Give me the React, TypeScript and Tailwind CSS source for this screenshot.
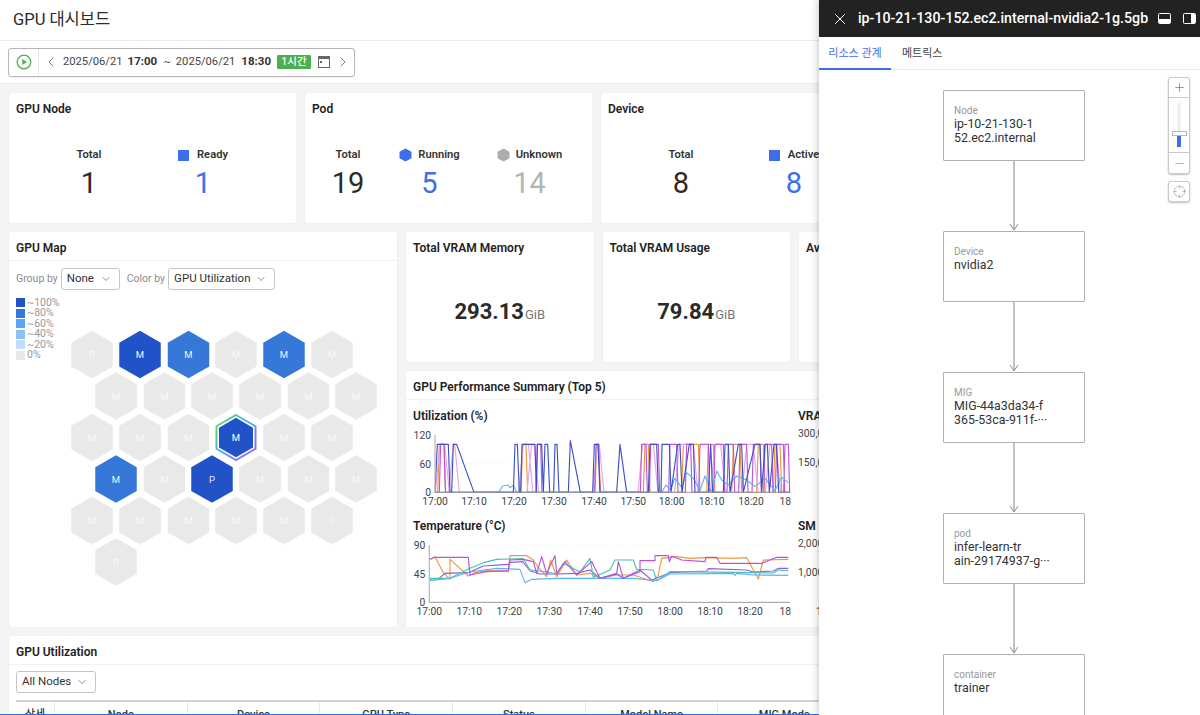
import { ChevronDown, ChevronLeft, ChevronRight, Crosshair, Minus, Plus, X } from "lucide-react";

const UTIL_TOP = 133;
const UTIL_BASE = 277;

function pulses(list: number[][], edge = 5) {
  const pts: string[] = [`105,${UTIL_BASE}`];
  for (const [a, b] of list) {
    pts.push(`${a - edge},${UTIL_BASE}`, `${a},${UTIL_TOP}`, `${b},${UTIL_TOP}`, `${b + edge},${UTIL_BASE}`);
  }
  pts.push(`1170,${UTIL_BASE}`);
  return pts.join(" ");
}

const utilSeries = [
  {
    color: "#f0973a",
    points: pulses([[118, 132], [368, 378], [590, 596], [735, 745], [850, 895], [925, 940], [1000, 1020], [1075, 1090], [1125, 1140]]),
  },
  {
    color: "#e6a4ea",
    points: pulses([[120, 134], [160, 164], [370, 385], [395, 402], [592, 598], [728, 760], [838, 880], [945, 962], [1040, 1060], [1110, 1128]], 14),
  },
  {
    color: "#bd55dc",
    points: pulses([[122, 132], [412, 422], [588, 596], [725, 738], [752, 775], [810, 830], [860, 872], [900, 925], [945, 970], [985, 1000], [1020, 1040], [1060, 1080], [1095, 1115], [1130, 1150], [1155, 1165]], 4),
  },
  {
    color: "#5cb2fb",
    points: "105,277 296,277 308,258 325,255 330,263 340,256 350,277 785,277 798,255 810,270 825,235 845,262 860,218 880,235 900,272 915,228 935,277 950,213 965,240 985,255 1010,228 1040,240 1065,260 1095,235 1125,272 1145,232 1165,248",
  },
  {
    color: "#3f50c4",
    points: "105,277 112,133 145,133 150,277 155,277 160,133 170,133 222,277 340,277 345,133 352,133 358,277 362,277 366,133 405,133 409,277 412,133 425,133 430,277 435,133 443,133 449,277 461,277 465,133 471,133 477,277 505,277 511,122 541,277 578,277 583,133 594,133 600,277 650,277 660,133 680,277 745,277 750,133 770,133 775,277 783,277 786,133 808,133 813,277 833,133 840,133 846,277 868,133 880,133 885,277 925,277 932,133 938,277 970,277 975,133 985,133 990,277 1015,133 1025,133 1030,277 1065,133 1080,133 1085,277 1095,133 1102,133 1108,277 1122,133 1130,133 1136,277 1170,277",
  },
];

const tempSeries = [
  {
    color: "#f0973a",
    points: "88,150 105,140 130,188 150,208 150,148 205,198 225,188 260,182 325,185 330,137 380,137 400,150 415,172 440,200 452,150 470,200 500,150 530,195 570,190 600,205 650,195 700,195 760,215 775,195 785,145 830,140 870,145 915,143 1000,145 1040,143 1075,207 1090,150 1165,148",
  },
  {
    color: "#8b5fe0",
    points: "88,207 115,207 135,190 205,188 250,168 325,163 330,157 368,155 390,182 420,192 470,192 530,190 570,180 600,205 650,192 670,205 720,180 755,210 810,188 920,183 925,176 1040,180 1060,186 1120,183 1135,175 1165,175",
  },
  {
    color: "#4fc1b3",
    points: "88,205 150,205 210,175 250,158 290,148 370,146 390,180 440,186 470,192 490,160 540,186 570,145 580,202 630,180 645,150 700,150 710,178 760,180 770,212 810,185 1000,187 1120,189 1135,180 1165,182",
  },
  {
    color: "#5cb2fb",
    points: "88,212 150,205 210,186 290,175 360,178 375,218 395,208 470,205 530,205 600,205 700,205 770,212 810,192 1000,190 1005,196 1010,190 1060,195 1165,196",
  },
  {
    color: "#b355dc",
    points: "88,148 105,142 205,142 210,195 260,185 325,182 330,150 370,148 400,155 410,190 425,140 440,190 465,137 470,190 495,155 530,195 575,155 600,205 650,190 655,155 670,205 720,185 720,152 765,152 765,137 805,137 808,155 815,138 845,150 915,155 918,142 950,142 960,160 1000,160 1085,160 1130,142 1165,142",
  },
];

const utilTicks = [
  ["17:00", 105], ["17:10", 222], ["17:20", 342], ["17:30", 462], ["17:40", 582],
  ["17:50", 700], ["18:00", 815], ["18:10", 935], ["18:20", 1053], ["18:30", 1177],
] as const;

const tempTicks = [
  ["17:00", 88], ["17:10", 208], ["17:20", 328], ["17:30", 448], ["17:40", 570],
  ["17:50", 690], ["18:00", 810], ["18:10", 930], ["18:20", 1050], ["18:30", 1177],
] as const;

function Chart({ title, yLabels, ticks, series, axisX }: {
  title: string;
  yLabels: string[];
  ticks: readonly (readonly [string, number])[];
  series: { color: string; points: string }[];
  axisX: number;
}) {
  return (
    <div className="h-[110px]">
      <div className="text-[12px] font-semibold leading-[16px] text-[#222]">{title}</div>
      <svg width={378} height={85} viewBox="39 78 1134 255" className="mt-[2px] block" fill="none">
        <line x1={axisX} x2={1170} y1={105} y2={105} stroke="#eeeeee" strokeWidth={2} strokeDasharray="3 4" />
        <line x1={axisX} x2={1170} y1={190} y2={190} stroke="#eeeeee" strokeWidth={2} strokeDasharray="3 4" />
        {series.map((s) => (
          <polyline key={s.color} points={s.points} stroke={s.color} strokeWidth={3.4} strokeLinejoin="round" />
        ))}
        <line x1={axisX} x2={axisX} y1={105} y2={278} stroke="#bdbdbd" strokeWidth={4} />
        <line x1={axisX} x2={1170} y1={277} y2={277} stroke="#9a9a9a" strokeWidth={3} />
        {yLabels.map((label, i) => (
          <text key={label} x={axisX - 12} y={117 + i * 86} textAnchor="end" fontSize={31} fill="#444">{label}</text>
        ))}
        {ticks.map(([label, x]) => (
          <text key={label} x={x} y={315} textAnchor="middle" fontSize={31} fill="#444">{label}</text>
        ))}
      </svg>
    </div>
  );
}

function SideChart({ title, labels, showTick }: { title: string; labels: string[]; showTick?: boolean }) {
  return (
    <div className="h-[110px]">
      <div className="text-[12px] font-semibold leading-[16px] text-[#222]">{title}</div>
      <svg width={378} height={85} viewBox="39 78 1134 255" className="mt-[2px] block">
        {labels.map((label, i) => (
          <text key={label} x={39} y={112 + i * 86} fontSize={31} fill="#444">{label}</text>
        ))}
        {showTick && <text x={93} y={315} fontSize={31} fill="#444">17:00</text>}
      </svg>
    </div>
  );
}

function Card({ title, className, children }: { title: string; className?: string; children?: React.ReactNode }) {
  return (
    <div className={`rounded-[2px] bg-white shadow-[0_0_1px_rgba(0,0,0,0.12)] ${className ?? ""}`}>
      <div className="px-[7px] pt-[8px] text-[12px] font-semibold leading-[16px] text-[#222]">{title}</div>
      {children}
    </div>
  );
}

function Stat({ label, value, valueClass, mark, className }: {
  label: string;
  value: string;
  valueClass?: string;
  mark?: "square" | "hexBlue" | "hexGray";
  className?: string;
}) {
  return (
    <div className={`flex flex-col items-center ${className ?? ""}`}>
      <div className="flex h-[16px] items-center gap-[6px] text-[11.2px] font-semibold text-[#333]">
        {mark === "square" && <span className="mr-[2px] h-[11px] w-[11px] bg-[#3e6ee8]" />}
        {mark === "hexBlue" && <HexIcon fill="#3e6ee8" />}
        {mark === "hexGray" && <HexIcon fill="#adadad" />}
        {label}
      </div>
      <div className={`mt-[2px] text-[29px] leading-[36px] ${valueClass ?? "text-[#2b2b2b]"}`}>{value}</div>
    </div>
  );
}

function HexIcon({ fill }: { fill: string }) {
  return (
    <svg width={13} height={14} viewBox="0 0 13 14">
      <polygon points="6.5,0.5 12.5,3.7 12.5,10.3 6.5,13.5 0.5,10.3 0.5,3.7" fill={fill} />
    </svg>
  );
}

function SelectBox({ label, className }: { label: string; className?: string }) {
  return (
    <div className={`flex h-[22px] items-center justify-between rounded-[3px] border border-[#c4c4c4] bg-white pl-[5px] pr-[7px] text-[11.5px] text-[#333] ${className ?? ""}`}>
      {label}
      <ChevronDown size={12} strokeWidth={1.5} className="text-[#666]" />
    </div>
  );
}

const GRAY = "#e9e9e9";
const DARK = "#2252c8";
const MID = "#3578d8";

const hexes: [number, number, string, string][] = [
  [92, 354.5, "P", GRAY], [140, 354.5, "M", DARK], [188.5, 354.5, "M", MID], [236, 354.5, "M", GRAY], [284, 354.5, "M", MID], [332, 354.5, "M", GRAY],
  [116, 396, "M", GRAY], [164.5, 396, "M", GRAY], [212, 396, "M", GRAY], [260, 396, "M", GRAY], [308.5, 396, "M", GRAY], [356, 396, "M", GRAY],
  [92, 437.5, "M", GRAY], [140, 437.5, "M", GRAY], [188.5, 437.5, "M", GRAY], [284, 437.5, "M", GRAY], [332, 437.5, "M", GRAY],
  [116, 479, "M", MID], [164.5, 479, "M", GRAY], [212, 479, "P", DARK], [260, 479, "M", GRAY], [308.5, 479, "M", GRAY], [356, 479, "M", GRAY],
  [92, 520.5, "M", GRAY], [140, 520.5, "M", GRAY], [188.5, 520.5, "M", GRAY], [236, 520.5, "M", GRAY], [284, 520.5, "M", GRAY], [332, 520.5, "P", GRAY],
  [116, 562, "P", GRAY],
];

function hexPoints(cx: number, cy: number, w: number, h: number) {
  const s = h / 4;
  return `${cx},${cy - h / 2} ${cx + w / 2},${cy - s} ${cx + w / 2},${cy + s} ${cx},${cy + h / 2} ${cx - w / 2},${cy + s} ${cx - w / 2},${cy - s}`;
}

function HexMap() {
  return (
    <svg width={388} height={331} viewBox="9 296 388 331" className="block">
      <defs>
        <linearGradient id="ring" x1="0" y1="0" x2="1" y2="1">
          <stop offset="0" stopColor="#6fdc55" />
          <stop offset="0.45" stopColor="#45b5dc" />
          <stop offset="1" stopColor="#b455f5" />
        </linearGradient>
      </defs>
      {hexes.map(([x, y, label, fill]) => (
        <g key={`${x}-${y}`}>
          <polygon points={hexPoints(x, y, 41.5, 47.5)} fill={fill} />
          <text x={x} y={y + 3.5} textAnchor="middle" fontSize={9.5} fill="#ffffff" fillOpacity={fill === GRAY ? 0.75 : 0.95}>{label}</text>
        </g>
      ))}
      <polygon points={hexPoints(236, 437.5, 39, 45)} fill="none" stroke="url(#ring)" strokeWidth={2} />
      <polygon points={hexPoints(236, 437.5, 34, 39.5)} fill={DARK} />
      <text x={236} y={441} textAnchor="middle" fontSize={9.5} fill="#ffffff">M</text>
    </svg>
  );
}

const legend = [
  ["#2252c8", "~100%"], ["#3578d8", "~80%"], ["#5aa5f5", "~60%"], ["#90bff5", "~40%"], ["#c2dcfc", "~20%"], ["#e8e8e8", "0%"],
];

const columns = ["상세", "Node", "Device", "GPU Type", "Status", "Model Name", "MIG Mode", "MIG Profile"];

const graphNodes = [
  { kind: "Node", lines: ["ip-10-21-130-1", "52.ec2.internal"] },
  { kind: "Device", lines: ["nvidia2"] },
  { kind: "MIG", lines: ["MIG-44a3da34-f", "365-53ca-911f-···"] },
  { kind: "pod", lines: ["infer-learn-tr", "ain-29174937-g···"] },
  { kind: "container", lines: ["trainer"] },
];

function Connector() {
  return (
    <svg width={12} height={70} viewBox="0 0 12 70" className="block">
      <line x1={6} x2={6} y1={0} y2={69} stroke="#999999" strokeWidth={1.2} />
      <polyline points="2,63 6,69 10,63" fill="none" stroke="#8f8f8f" strokeWidth={1} />
    </svg>
  );
}

function DetailPanel() {
  return (
    <div className="absolute bottom-0 right-0 top-0 z-10 flex w-[381px] flex-col bg-white shadow-[-2px_0_6px_rgba(0,0,0,0.18)]">
      <div className="flex h-[37px] shrink-0 items-center bg-[#222222] text-white">
        <X size={18} strokeWidth={1.3} className="ml-[12px]" />
        <span className="ml-[9px] whitespace-nowrap pt-[1px] text-[14.2px] font-medium">ip-10-21-130-152.ec2.internal-nvidia2-1g.5gb</span>
        <svg width={13} height={11} viewBox="0 0 13 11" className="ml-[10px] shrink-0">
          <rect x="0.5" y="0.5" width="12" height="10" rx="1" fill="none" stroke="#fff" />
          <rect x="1" y="6" width="11" height="4" fill="#fff" />
        </svg>
        <svg width={13} height={11} viewBox="0 0 13 11" className="ml-[12px] shrink-0">
          <rect x="0.5" y="0.5" width="12" height="10" rx="1" fill="none" stroke="#fff" />
          <rect x="8" y="1" width="4" height="9" fill="#fff" />
        </svg>
      </div>
      <div className="flex h-[33px] shrink-0 border-b border-[#e9e9e9] text-[11px]">
        <div className="flex h-[33px] w-[72px] items-center justify-center border-b-2 border-[#3e6ee8] pt-[3px] text-[#3e6ee8]">리소스 관계</div>
        <div className="ml-[11px] flex h-[32px] items-center pt-[3px] text-[#444]">메트릭스</div>
      </div>
      <div className="relative flex-1 overflow-hidden">
        <div className="ml-[124px] flex w-[142px] flex-col items-center pt-[20px]">
          {graphNodes.map((node, i) => (
            <div key={node.kind} className="flex flex-col items-center">
              <div className="h-[71px] w-[142px] rounded-[1px] border border-[#b0b0b0] bg-white px-[10px] pt-[13px] text-[12.4px] leading-[14px] text-[#333]">
                <div className="text-[10px] leading-[13px] text-[#999]">{node.kind}</div>
                {node.lines.map((line) => (
                  <div key={line} className="whitespace-nowrap">{line}</div>
                ))}
              </div>
              {i < graphNodes.length - 1 && <Connector />}
            </div>
          ))}
        </div>
        <div className="absolute right-[10px] top-[7px] flex flex-col gap-[7px]">
          <div className="flex h-[97px] w-[22px] flex-col items-center rounded-[3px] border border-[#cacaca] bg-white shadow-[0_1px_2px_rgba(0,0,0,0.25)]">
            <div className="flex h-[20px] w-full items-center justify-center border-b border-[#cacaca]">
              <Plus size={13} strokeWidth={1.2} className="text-[#666]" />
            </div>
            <div className="relative h-[55px] w-full border-b border-[#cacaca]">
              <div className="absolute bottom-[5px] left-[8px] top-[5px] w-[4px] bg-[#efefef]" />
              <div className="absolute bottom-[5px] left-[8px] h-[11px] w-[4px] bg-[#3e6ee8]" />
              <div className="absolute bottom-[16px] left-[3px] h-[5px] w-[15px] border border-[#b8b8b8] bg-white" />
            </div>
            <div className="flex flex-1 items-center justify-center">
              <Minus size={13} strokeWidth={1.2} className="text-[#888]" />
            </div>
          </div>
          <div className="flex h-[21px] w-[22px] items-center justify-center rounded-[3px] border border-[#cacaca] bg-white shadow-[0_1px_2px_rgba(0,0,0,0.25)]">
            <Crosshair size={13} strokeWidth={1} className="text-[#888]" />
          </div>
        </div>
      </div>
    </div>
  );
}

export default function App() {
  return (
    <div className="relative h-[715px] w-[1200px] overflow-hidden bg-[#f4f4f4] font-['Roboto','Noto_Sans_CJK_KR',sans-serif]">
      <div className="flex h-[41px] items-center border-b border-[#ececec] bg-white pl-[13px] text-[16.5px] text-[#2b2b2b]">GPU 대시보드</div>
      <div className="flex h-[43px] items-center border-b border-[#ececec] bg-white pl-[8px]">
        <div className="flex h-[29px] w-[347px] items-center rounded-[3px] border border-[#b5b5b5] text-[11.2px] text-[#444] shadow-[0_1px_1px_rgba(0,0,0,0.06)]">
          <div className="flex h-full w-[30px] items-center justify-center border-r border-[#e4e4e4]">
            <svg width={16} height={16} viewBox="0 0 16 16">
              <circle cx="8" cy="8" r="6.8" fill="none" stroke="#4caf50" strokeWidth="1.3" />
              <polygon points="6.3,5 11,8 6.3,11" fill="#4caf50" />
            </svg>
          </div>
          <ChevronLeft size={16} strokeWidth={1.3} className="ml-[4px] text-[#666]" />
          <span className="ml-[4px]">2025/06/21</span>
          <span className="ml-[5px] text-[11.5px] font-bold text-[#333]">17:00</span>
          <span className="ml-[6px]">~</span>
          <span className="ml-[5px]">2025/06/21</span>
          <span className="ml-[6px] text-[11.5px] font-bold text-[#333]">18:30</span>
          <span className="ml-[6px] flex h-[14px] w-[34px] items-center justify-center rounded-[1px] bg-[#4caf50] text-[10.5px] font-medium text-white">1시간</span>
          <svg width={12} height={12} viewBox="0 0 12 12" className="ml-[7px]">
            <rect x="0.5" y="0.5" width="11" height="11" fill="none" stroke="#666" />
            <rect x="0.5" y="0.5" width="11" height="2.5" fill="#666" />
            <rect x="2" y="5" width="2" height="2" fill="#666" />
          </svg>
          <ChevronRight size={16} strokeWidth={1.3} className="ml-[5px] text-[#666]" />
        </div>
      </div>

      <div className="flex w-[1400px] flex-col gap-[9px] p-[9px]">
        <div className="flex gap-[9px]">
          <Card title="GPU Node" className="h-[130px] w-[287px]">
            <div className="flex pt-[30px]">
              <Stat label="Total" value="1" className="ml-[48px] w-[64px]" />
              <Stat label="Ready" value="1" mark="square" valueClass="text-[#3e6ee8]" className="ml-[50px] w-[64px]" />
            </div>
          </Card>
          <Card title="Pod" className="h-[130px] w-[287px]">
            <div className="flex pt-[30px]">
              <Stat label="Total" value="19" className="ml-[11px] w-[64px]" />
              <Stat label="Running" value="5" mark="hexBlue" valueClass="text-[#3e6ee8]" className="ml-[12px] w-[75px]" />
              <Stat label="Unknown" value="14" mark="hexGray" valueClass="text-[#b4b4b4]" className="ml-[25px] w-[75px]" />
            </div>
          </Card>
          <Card title="Device" className="h-[130px] w-[287px]">
            <div className="flex pt-[30px]">
              <Stat label="Total" value="8" className="ml-[48px] w-[64px]" />
              <Stat label="Active" value="8" mark="square" valueClass="text-[#3e6ee8]" className="ml-[48px] w-[66px]" />
            </div>
          </Card>
        </div>

        <div className="flex gap-[9px]">
          <div className="relative h-[395px] w-[388px] rounded-[2px] bg-white shadow-[0_0_1px_rgba(0,0,0,0.12)]">
            <div className="h-[29px] border-b border-[#f0f0f0] px-[7px] pt-[8px] text-[12px] font-semibold leading-[16px] text-[#222]">GPU Map</div>
            <div className="flex h-[35px] items-center px-[7px] text-[10.5px] text-[#8c8c8c]">
              <span>Group by</span>
              <SelectBox label="None" className="ml-[3px] w-[59px]" />
              <span className="ml-[7px]">Color by</span>
              <SelectBox label="GPU Utilization" className="ml-[3px] w-[107px]" />
            </div>
            <HexMap />
            <div className="absolute left-[7px] top-[65.5px] flex flex-col">
              {legend.map(([color, label]) => (
                <div key={label} className="flex h-[10.5px] items-center gap-[2px] text-[10.5px] text-[#999]">
                  <span className="h-[9px] w-[9px]" style={{ backgroundColor: color }} />
                  {label}
                </div>
              ))}
            </div>
          </div>

          <div className="flex w-[990px] flex-col gap-[9px]">
            <div className="flex gap-[9px]">
              {[["Total VRAM Memory", "293.13"], ["Total VRAM Usage", "79.84"]].map(([title, value]) => (
                <Card key={title} title={title} className="h-[130px] w-[187.5px]">
                  <div className="flex items-baseline justify-center pt-[39px]">
                    <span className="text-[22px] font-bold text-[#2b2b2b]">{value}</span>
                    <span className="ml-[1px] text-[13px] text-[#777]">GiB</span>
                  </div>
                </Card>
              ))}
              <Card title="Average VRAM" className="h-[130px] w-[188px]" />
            </div>
            <div className="h-[256px] rounded-[2px] bg-white shadow-[0_0_1px_rgba(0,0,0,0.12)]">
              <div className="h-[29px] border-b border-[#f0f0f0] px-[7px] pt-[8px] text-[12px] font-semibold leading-[16px] text-[#222]">GPU Performance Summary (Top 5)</div>
              <div className="grid grid-cols-[378px_378px] gap-x-[7px] gap-y-[0px] px-[7px] pt-[8px]">
                <Chart title="Utilization (%)" yLabels={["120", "60", "0"]} ticks={utilTicks} series={utilSeries} axisX={105} />
                <SideChart title="VRAM Usage" labels={["300,000", "150,000"]} />
                <Chart title="Temperature (°C)" yLabels={["90", "45", "0"]} ticks={tempTicks} series={tempSeries} axisX={88} />
                <SideChart title="SM Clock" labels={["2,000", "1,000"]} showTick />
              </div>
            </div>
          </div>
        </div>

        <div className="h-[100px] w-[1182px] rounded-[2px] bg-white shadow-[0_0_1px_rgba(0,0,0,0.12)]">
          <div className="h-[29px] border-b border-[#f0f0f0] px-[7px] pt-[8px] text-[12px] font-semibold leading-[16px] text-[#222]">GPU Utilization</div>
          <div className="px-[7px] pt-[6px]">
            <SelectBox label="All Nodes" className="w-[80px]" />
          </div>
          <div className="mx-[7px] mt-[7px] flex h-[30px] border-t-2 border-[#d4d4d4] text-[11px] font-medium text-[#333]">
            <div className="flex w-[39px] justify-center border-r border-[#e8e8e8] pt-[5px]">{columns[0]}</div>
            {columns.slice(1).map((col) => (
              <div key={col} className="flex w-[132.7px] justify-center border-r border-[#e8e8e8] pt-[5px]">{col}</div>
            ))}
          </div>
        </div>
      </div>

      <div className="absolute bottom-0 left-0 h-[1.5px] w-[819px] bg-[#2f6fd6]" />
      <DetailPanel />
    </div>
  );
}
